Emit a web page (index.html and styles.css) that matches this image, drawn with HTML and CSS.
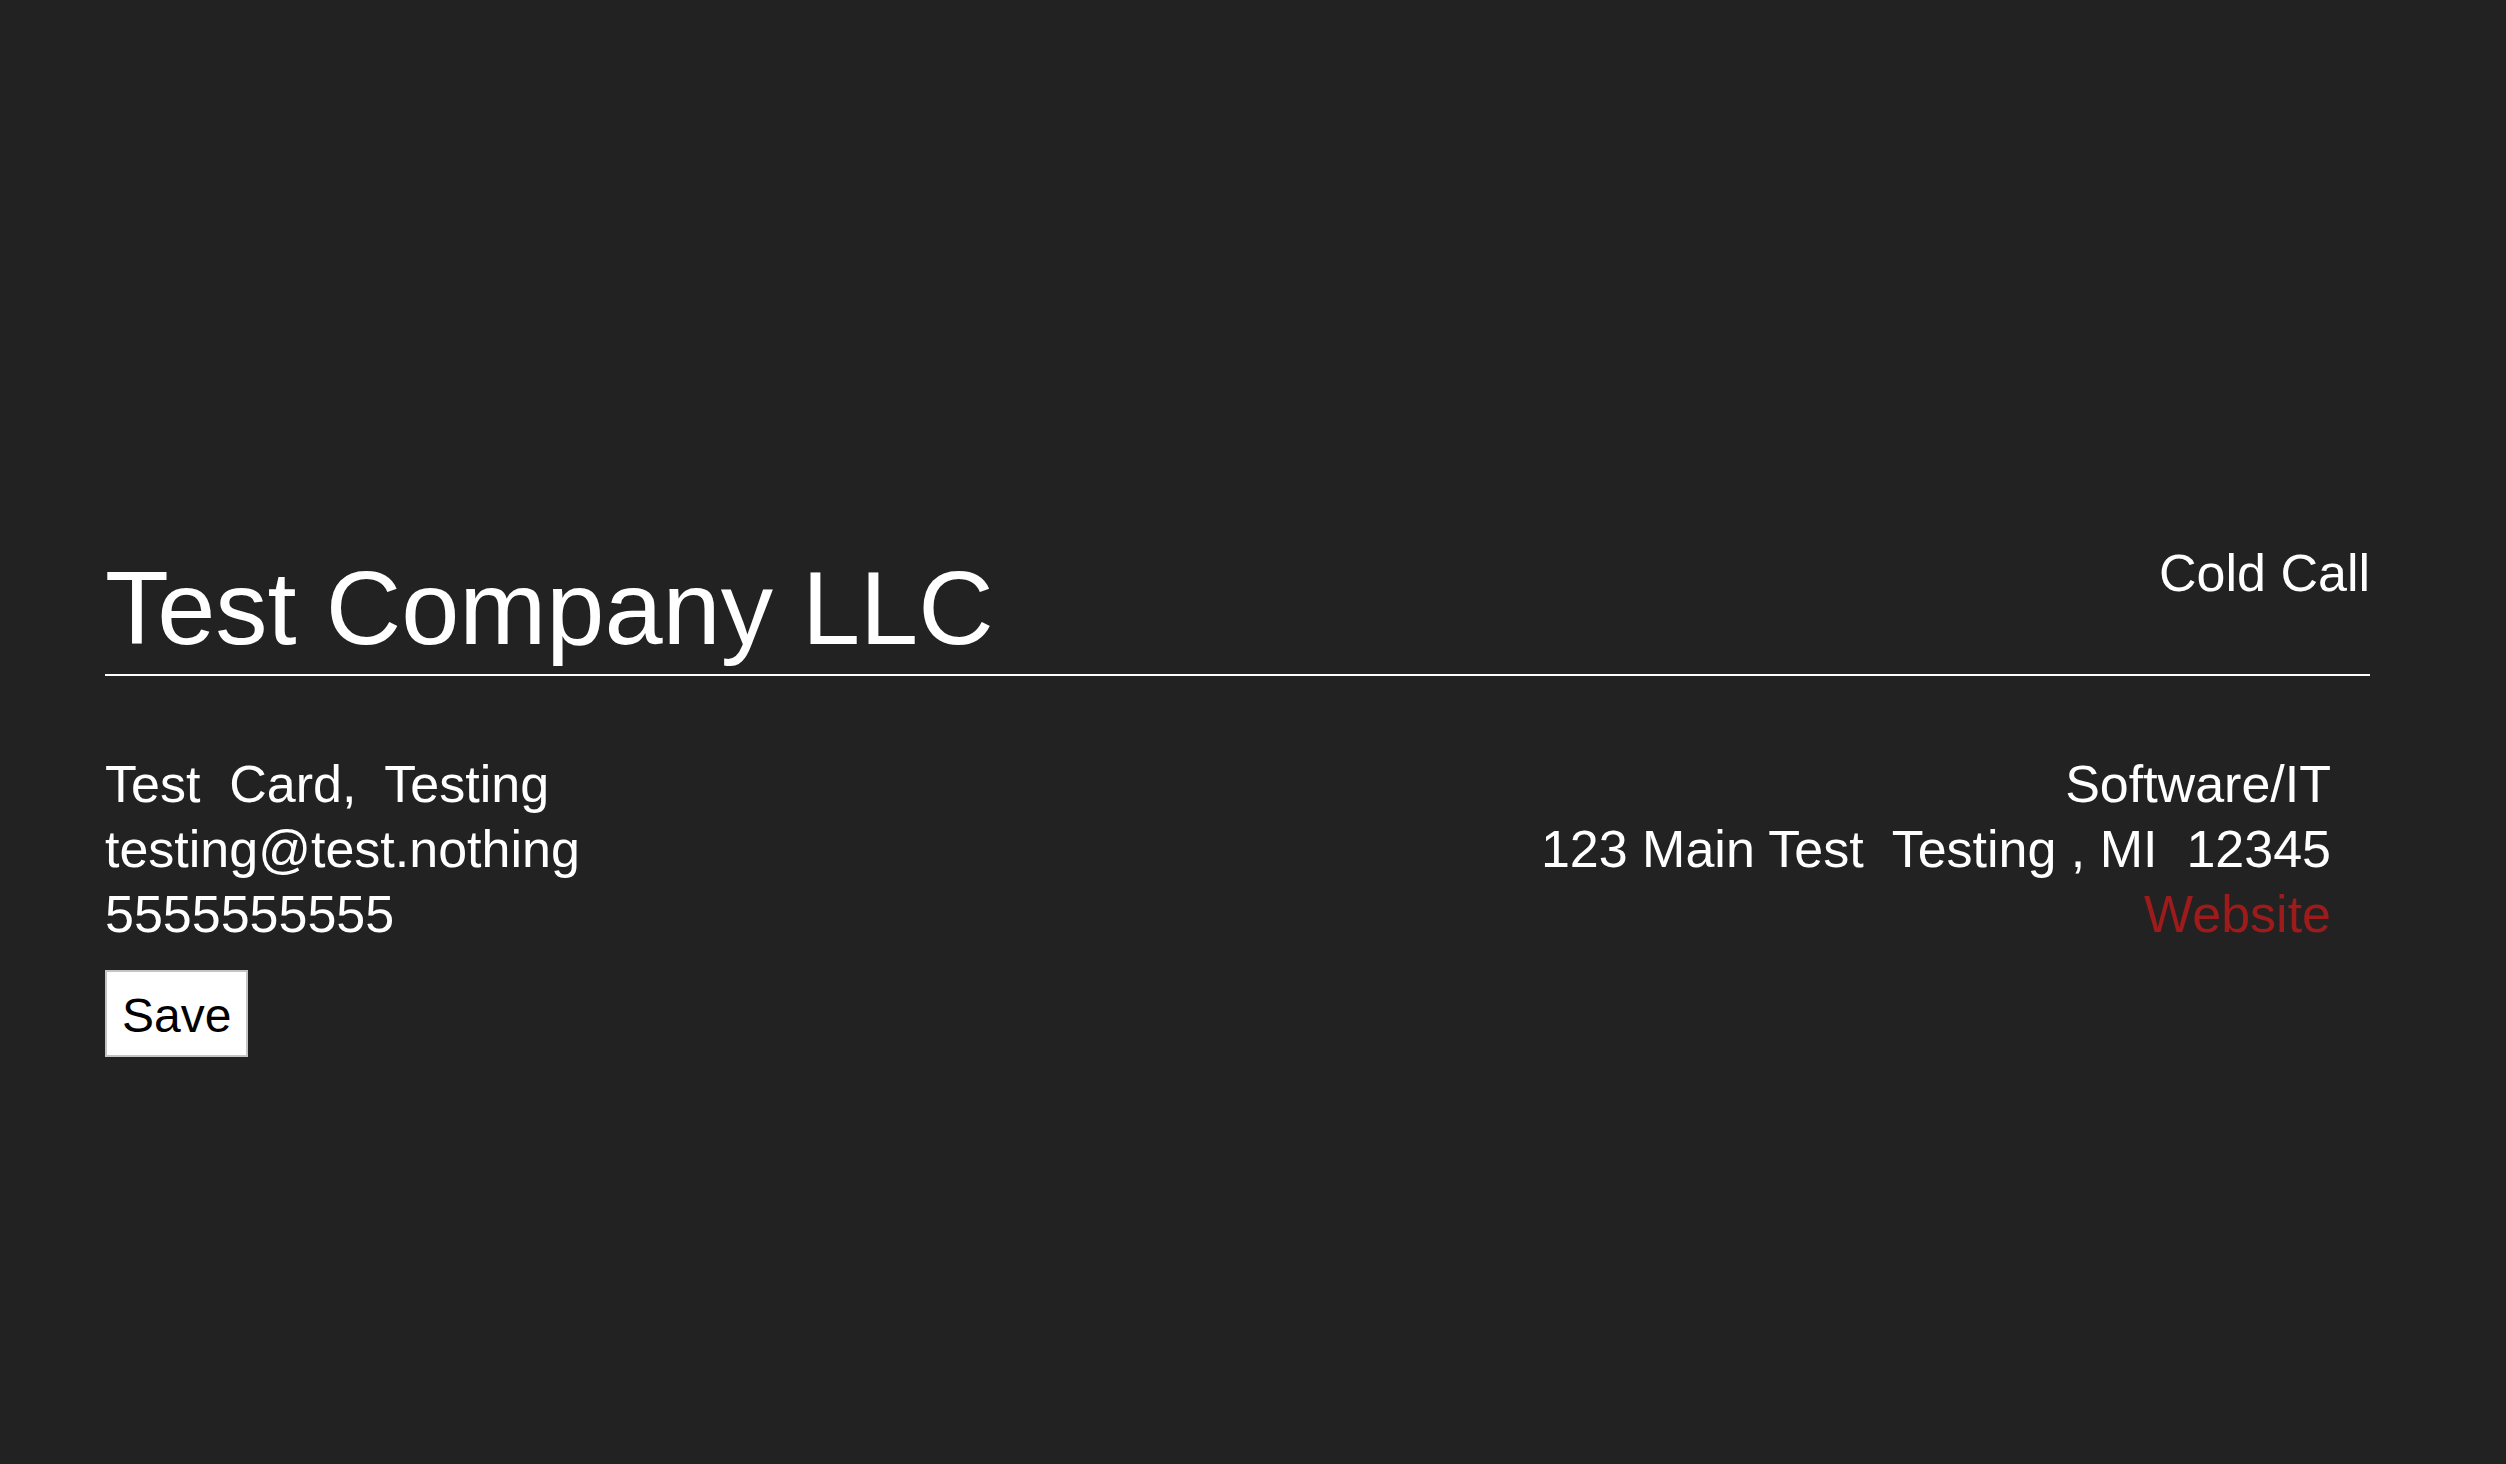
FILE: index.html
```html
<!DOCTYPE html>
<html lang="en">
<head>
<meta charset="utf-8">
<title>Test Company LLC</title>
<link rel="stylesheet" href="styles.css">
</head>
<body>
<main class="page">
  <header class="card-header">
    <h1 class="company">Test Company LLC</h1>
    <div class="status">Cold Call</div>
  </header>
  <section class="details">
    <div class="contact">
      <div class="line">Test&nbsp; Card,&nbsp; Testing</div>
      <div class="line">testing@test.nothing</div>
      <div class="line">5555555555</div>
      <button class="save" type="button">Save</button>
    </div>
    <div class="company-info">
      <div class="line">Software/IT</div>
      <div class="line">123 Main Test&nbsp; Testing , MI&nbsp; 12345</div>
      <div class="line"><a class="website" href="#">Website</a></div>
    </div>
  </section>
</main>
</body>
</html>
```

FILE: styles.css
```css
html, body {
  margin: 0;
  padding: 0;
  background: #222222;
  height: 100%;
}

body {
  color: #ffffff;
  font-family: "Liberation Sans", Arial, Helvetica, sans-serif;
}

.page {
  padding: 547px 136px 0 105px;
}

.card-header {
  display: flex;
  justify-content: space-between;
  align-items: flex-start;
  border-bottom: 2px solid #ffffff;
  padding-bottom: 13px;
}

.company {
  margin: 9px 0 0 0;
  font-size: 104.5px;
  line-height: 1;
  font-weight: normal;
}

.status {
  font-size: 52px;
  line-height: 1;
}

.details {
  display: flex;
  justify-content: space-between;
  align-items: flex-start;
  margin-top: 76px;
  font-size: 52px;
  line-height: 65px;
}

.company-info {
  text-align: right;
  padding-right: 39px;
}

.website {
  color: #9e1b1b;
  text-decoration: none;
}

.save {
  margin-top: 23px;
  display: block;
  background: #ffffff;
  color: #000000;
  border: 2px solid #c4c4c4;
  border-radius: 0;
  font-family: "Liberation Sans", Arial, Helvetica, sans-serif;
  font-size: 48px;
  line-height: 55px;
  padding: 16px 15px 12px 15px;
}
```
